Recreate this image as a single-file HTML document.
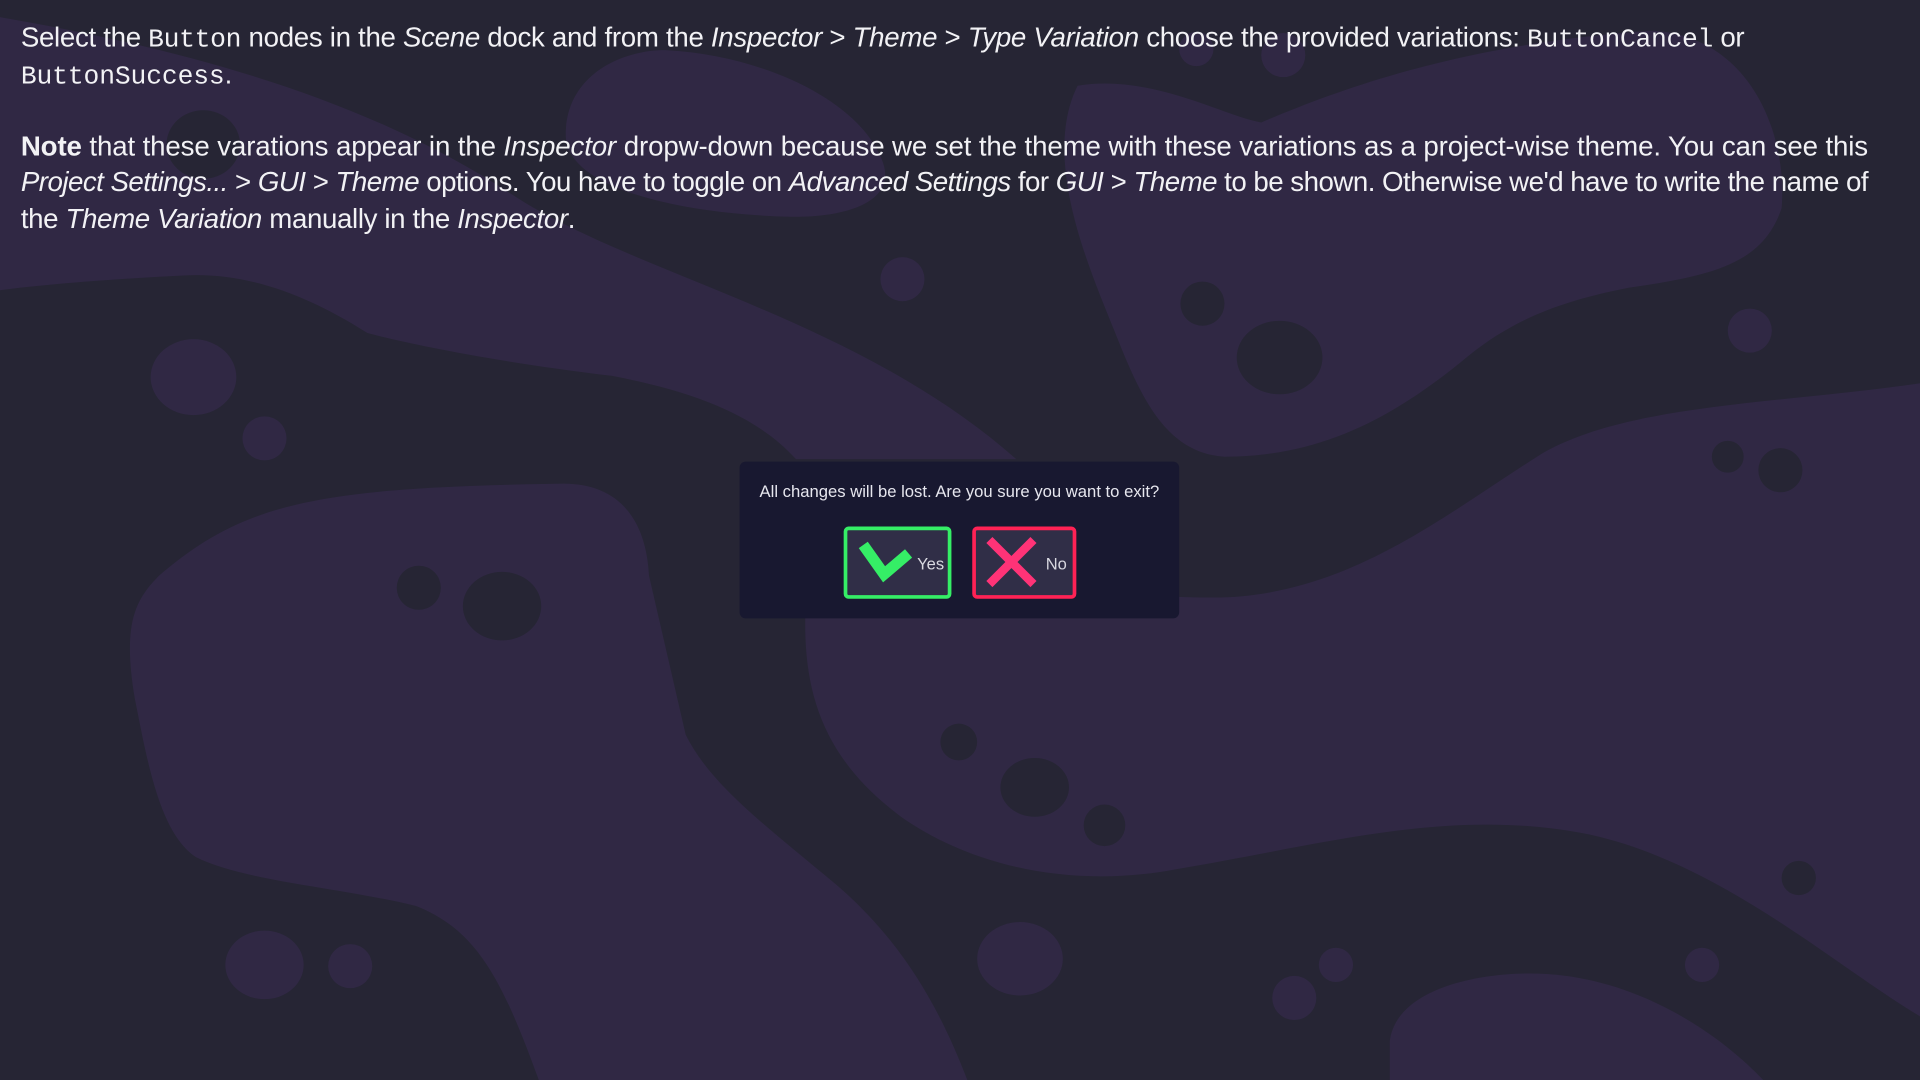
<!DOCTYPE html>
<html><head><meta charset="utf-8"><style>
html,body{margin:0;padding:0;background:#262534;overflow:hidden}
#w{position:absolute;left:0;top:0;width:1568px;height:882px;transform:scale(1.22449);transform-origin:0 0;overflow:hidden}
svg.bg{position:absolute;left:0;top:0}
.txt{position:absolute;left:17px;top:16px;width:1560px;white-space:nowrap;font-family:"Liberation Sans",sans-serif;font-size:22.6px;line-height:29.5px;color:#f2f2f5;letter-spacing:-0.1px}
.txt p{margin:0 0 29.5px 0}
.l{display:block;height:29.5px}
code{font-family:"Liberation Mono",monospace;font-size:21.5px;line-height:1}
.dlg{position:absolute;left:604px;top:377px;width:359px;height:128px;background:#181830;border-radius:5px}
.msg{position:absolute;left:0;right:0;top:17px;text-align:center;font-family:"Liberation Sans",sans-serif;font-size:13.6px;color:#e6e6ee}
.btn{position:absolute;top:53px;height:59px;background:#302e47;border-radius:4px;box-sizing:border-box}
.btn span{position:absolute;top:20px;font-family:"Liberation Sans",sans-serif;font-size:13.5px;color:#d8d8e0}
.ic{position:absolute;left:0;top:0}
</style></head><body><div id="w">
<svg class="bg" width="1568" height="882" viewBox="0 0 1568 882">
<g fill="#302844">
<path d="M0,14 C150,40 300,80 420,160 C520,225 700,260 830,375 L650,375 C610,330 540,315 500,307 C400,295 330,280 300,272 C250,240 200,222 150,225 C90,228 40,232 0,237 Z"/>
<path d="M462,110 C462,60 510,40 545,41 C620,45 700,80 720,130 C735,165 690,178 645,177 C560,175 462,155 462,110 Z"/>
<path d="M880,70 C940,60 1000,95 1030,100 C1100,70 1200,35 1350,25 C1430,30 1460,110 1455,170 C1440,215 1400,225 1330,235 C1280,245 1240,258 1200,290 C1140,340 1080,373 1000,373 C950,370 930,320 910,270 C890,220 850,130 880,70 Z"/>
<path d="M1568,313 C1450,330 1330,330 1260,370 C1180,420 1100,488 990,488 C900,488 830,470 760,470 L660,470 C650,560 670,620 740,670 C800,710 880,725 960,710 C1080,690 1180,660 1290,680 C1400,700 1500,790 1568,830 Z"/>
<path d="M130,470 C200,410 260,398 460,395 C510,395 528,430 530,470 L560,600 C580,640 620,670 680,720 C740,770 770,830 790,882 L440,882 C410,800 390,760 340,740 C280,725 200,720 160,700 C130,680 120,620 110,570 C100,510 110,490 130,470 Z"/>
<path d="M1135,850 C1140,810 1200,795 1250,795 C1330,795 1400,840 1440,882 L1135,882 Z"/>
<ellipse cx="158" cy="308" rx="35" ry="31"/><circle cx="216" cy="358" r="18"/><circle cx="737" cy="228" r="18"/><circle cx="1429" cy="270" r="18"/>
<ellipse cx="833" cy="783" rx="35" ry="30"/><ellipse cx="216" cy="788" rx="32" ry="28"/><circle cx="286" cy="789" r="18"/><circle cx="1057" cy="815" r="18"/><circle cx="1091" cy="788" r="14"/><circle cx="1390" cy="788" r="14"/><circle cx="1048" cy="45" r="18"/><circle cx="977" cy="40" r="14"/>
</g>
<g fill="#262534">
<ellipse cx="166" cy="118" rx="30" ry="28"/><circle cx="982" cy="248" r="18"/><ellipse cx="1045" cy="292" rx="35" ry="30"/><circle cx="342" cy="480" r="18"/><ellipse cx="410" cy="495" rx="32" ry="28"/><circle cx="1411" cy="373" r="13"/><circle cx="1454" cy="384" r="18"/><circle cx="783" cy="606" r="15"/><ellipse cx="845" cy="643" rx="28" ry="24"/><circle cx="902" cy="674" r="17"/><circle cx="1469" cy="717" r="14"/>
</g>
</svg>
<div class="txt">
<p><span class="l" style="letter-spacing:-0.25px">Select the <code>Button</code> nodes in the <i>Scene</i> dock and from the <i>Inspector</i> &gt; <i>Theme</i> &gt; <i>Type Variation</i> choose the provided variations: <code>ButtonCancel</code> or</span><span class="l"><code>ButtonSuccess</code>.</span></p>
<p><span class="l"><b>Note</b> that these varations appear in the <i>Inspector</i> dropw-down because we set the theme with these variations as a project-wise theme. You can see this</span><span class="l" style="letter-spacing:-0.42px"><i>Project Settings...</i> &gt; <i>GUI</i> &gt; <i>Theme</i> options. You have to toggle on <i>Advanced Settings</i> for <i>GUI</i> &gt; <i>Theme</i> to be shown. Otherwise we'd have to write the name of</span><span class="l" style="letter-spacing:-0.3px">the <i>Theme Variation</i> manually in the <i>Inspector</i>.</span></p>
</div>
<div class="dlg">
<div class="msg">All changes will be lost. Are you sure you want to exit?</div>
<div class="btn" style="left:85px;width:88px;border:3px solid #35ee66"><span style="left:57px">Yes</span></div>
<div class="btn" style="left:190px;width:85px;border:3px solid #ff2255"><span style="left:57px">No</span></div>
<svg class="ic" width="359" height="128" viewBox="0 0 359 128">
<path d="M101,68 L118,92 L138,75" fill="none" stroke="#35ee66" stroke-width="9" stroke-linejoin="miter"/>
<path d="M204,64 L240,100 M240,64 L204,100" fill="none" stroke="#ff3377" stroke-width="7"/>
</svg>
</div>
</div></body></html>
